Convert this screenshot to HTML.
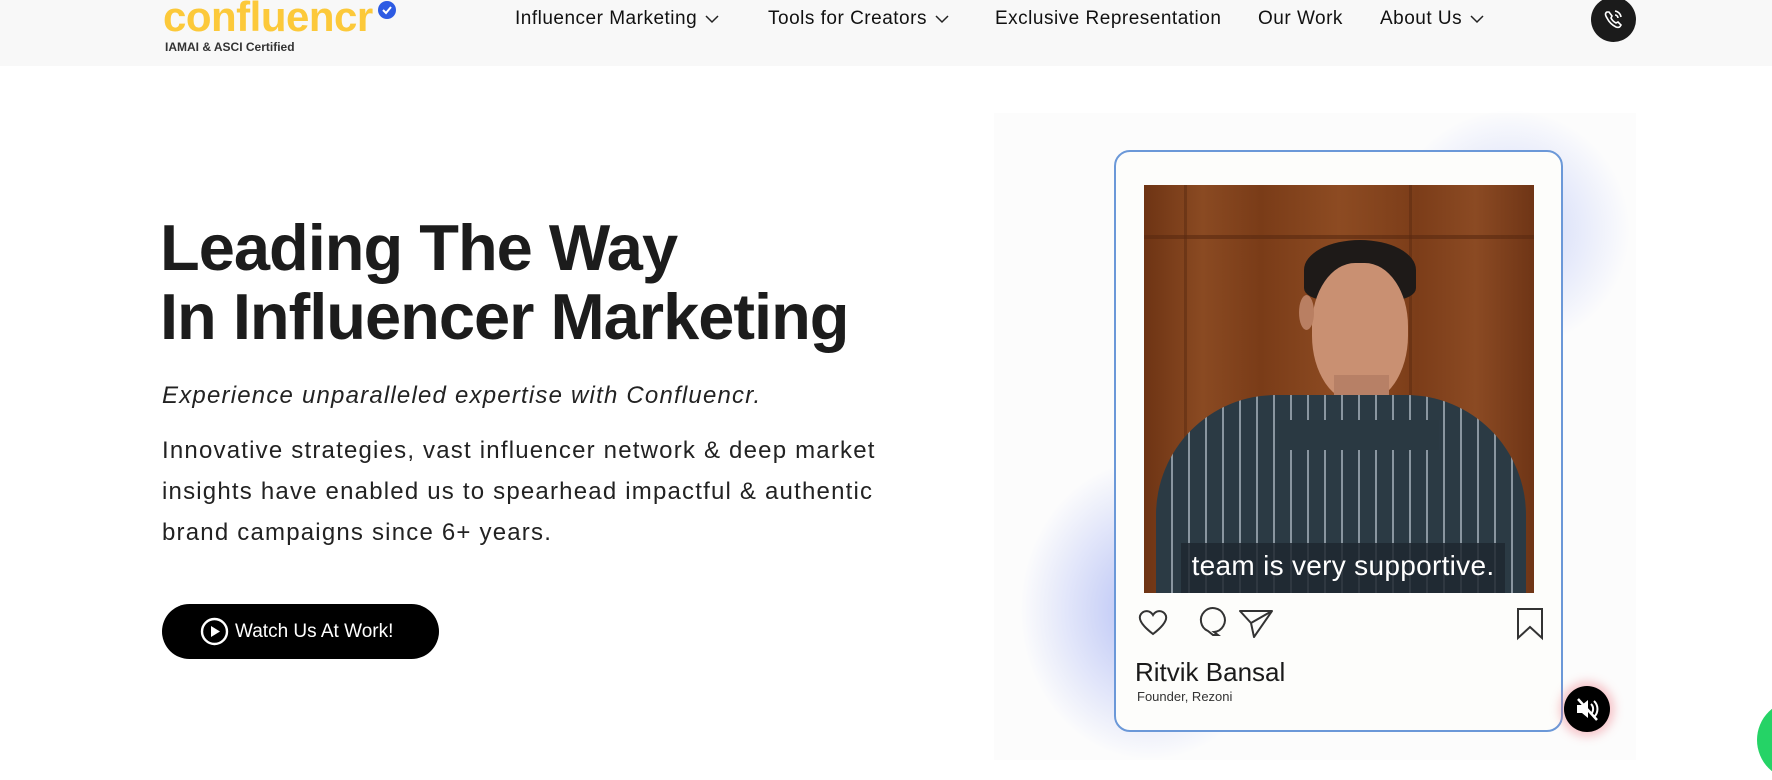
<!DOCTYPE html>
<html><head><meta charset="utf-8"><style>
*{margin:0;padding:0;box-sizing:border-box}
body{width:1772px;height:760px;overflow:hidden;background:#fff;font-family:"Liberation Sans",sans-serif;color:#1a1a1a;position:relative}
.abs{position:absolute}
header{position:absolute;left:0;top:0;width:1772px;height:66px;background:#f8f8f8}
.nav{position:absolute;top:8px;font-size:19px;color:#111;white-space:nowrap;letter-spacing:0.5px}
.nav svg{vertical-align:middle;margin-left:8px}
</style></head><body>
<header>
  <div class="abs" style="left:163px;top:-7px;font-size:42px;font-weight:bold;color:#fcc93a;letter-spacing:-0.5px">confluencr</div>
  <div class="abs" style="left:378px;top:1px;width:18px;height:18px;border-radius:50%;background:#2d5be3"><svg width="18" height="18" viewBox="0 0 18 18"><path d="M5 9l3 3 5-6" stroke="#fff" stroke-width="2" fill="none"/></svg></div>
  <div class="abs" style="left:165px;top:40px;font-size:12px;font-weight:bold;color:#333">IAMAI &amp; ASCI Certified</div>
  <div class="nav" style="left:515px">Influencer Marketing<svg width="14" height="10"><path d="M1 2l6 6 6-6" stroke="#222" stroke-width="1.5" fill="none"/></svg></div>
  <div class="nav" style="left:768px">Tools for Creators<svg width="14" height="10"><path d="M1 2l6 6 6-6" stroke="#222" stroke-width="1.5" fill="none"/></svg></div>
  <div class="nav" style="left:995px">Exclusive Representation</div>
  <div class="nav" style="left:1258px">Our Work</div>
  <div class="nav" style="left:1380px">About Us<svg width="14" height="10"><path d="M1 2l6 6 6-6" stroke="#222" stroke-width="1.5" fill="none"/></svg></div>
  <div class="abs" style="left:1591px;top:-3px;width:45px;height:45px;border-radius:50%;background:#1b1b1b">
    <svg width="45" height="45" viewBox="0 0 45 45"><path d="M16 15c-2 1-2 3 0 6 2 4 5 7 9 9 3 1 4 0 5-2l-3-3-2 1c-2-1-4-3-5-5l1-2-3-4z" stroke="#fff" stroke-width="1.6" fill="none"/><path d="M24 14a7 7 0 0 1 6 6M24 18a3 3 0 0 1 3 3" stroke="#fff" stroke-width="1.6" fill="none"/></svg>
  </div>
</header>

<div class="abs" style="left:160px;top:213px;font-size:65px;font-weight:bold;line-height:69px;letter-spacing:-1px;color:#1c1c1c">Leading The Way<br>In Influencer Marketing</div>
<div class="abs" style="left:162px;top:382px;font-size:24px;font-style:italic;color:#222;letter-spacing:1.2px">Experience unparalleled expertise with Confluencr.</div>
<div class="abs" style="left:162px;top:430px;font-size:24px;line-height:41px;color:#222;width:820px;letter-spacing:1.2px">Innovative strategies, vast influencer network &amp; deep market<br>insights have enabled us to spearhead impactful &amp; authentic<br>brand campaigns since 6+ years.</div>
<div class="abs" style="left:162px;top:604px;width:277px;height:55px;border-radius:28px;background:#000;color:#fff;font-size:19px;line-height:55px;padding-left:73px">Watch Us At Work!
  <svg class="abs" style="left:38px;top:13px" width="29" height="29" viewBox="0 0 29 29"><circle cx="14.5" cy="14.5" r="12.5" stroke="#fff" stroke-width="2.4" fill="none"/><path d="M11 9l9 5.5-9 5.5z" fill="#fff"/></svg>
</div>

<!-- right panel -->
<div class="abs" style="left:994px;top:113px;width:642px;height:647px;background:#fcfcfc"></div>
<div class="abs" style="left:1020px;top:460px;width:260px;height:300px;border-radius:50%;background:radial-gradient(closest-side,rgba(120,140,240,.55),rgba(120,140,240,0));"></div>
<div class="abs" style="left:1390px;top:110px;width:240px;height:240px;border-radius:50%;background:radial-gradient(closest-side,rgba(140,160,245,.45),rgba(140,160,245,0));"></div>

<div class="abs" style="left:1114px;top:150px;width:449px;height:582px;border:2px solid #6b98d8;border-radius:16px;background:#fdfdfb;overflow:hidden">
  <div class="abs" style="left:28px;top:33px;width:390px;height:408px;overflow:hidden;background:linear-gradient(90deg,#6e3414 0%,#8a4a22 15%,#7a3c18 30%,#8d4b22 50%,#7c3d19 70%,#8b4a23 85%,#6f3516 100%)">
    <div class="abs" style="left:0;top:50px;width:390px;height:4px;background:#5a2a10;opacity:.6"></div>
    <div class="abs" style="left:40px;top:0;width:3px;height:408px;background:#5a2a10;opacity:.5"></div>
    <div class="abs" style="left:265px;top:0;width:3px;height:408px;background:#5a2a10;opacity:.5"></div>
    <div class="abs" style="left:160px;top:55px;width:112px;height:60px;border-radius:50% 50% 20% 20%;background:#1e1a18"></div>
    <div class="abs" style="left:168px;top:78px;width:96px;height:140px;border-radius:45% 45% 48% 48%;background:#c99072"></div>
    <div class="abs" style="left:155px;top:110px;width:15px;height:35px;border-radius:50%;background:#b97f62"></div>
    <div class="abs" style="left:190px;top:190px;width:55px;height:60px;background:#b78066"></div>
    <div class="abs" style="left:12px;top:210px;width:370px;height:260px;border-radius:120px 120px 0 0;background:repeating-linear-gradient(90deg,#2b3a44 0 15px,#8a96a0 15px 17px);"></div>
    <div class="abs" style="left:135px;top:235px;width:160px;height:30px;background:#2a3942"></div>
    <div class="abs" style="left:37px;top:358px;width:324px;height:50px;background:rgba(30,40,48,.85)"></div>
    <div class="abs" style="left:37px;top:358px;width:324px;height:50px;color:#fff;font-size:28px;line-height:46px;text-align:center;letter-spacing:0.3px">team is very supportive.</div>
  </div>
  <svg class="abs" style="left:20px;top:452px" width="420" height="40" viewBox="0 0 420 40">
    <path d="M17 30C4 20 2 14 5 10c3-4 9-4 12 1 3-5 9-5 12-1 3 4 1 10-12 20z" stroke="#333" stroke-width="2" fill="none"/>
    <path d="M72 27a12 12 0 1 1 6 1l4 3-5 0z" stroke="#333" stroke-width="2" fill="none"/>
    <path d="M104 7h32l-18 26-3-14zM115 19l21-12" stroke="#333" stroke-width="2" fill="none" stroke-linejoin="round"/>
    <path d="M382 5h24v29l-12-11-12 11z" stroke="#333" stroke-width="2" fill="none"/>
  </svg>
  <div class="abs" style="left:19px;top:505px;font-size:26px;color:#1a1a1a">Ritvik Bansal</div>
  <div class="abs" style="left:21px;top:537px;font-size:13px;color:#333">Founder, Rezoni</div>
</div>

<div class="abs" style="left:1564px;top:686px;width:46px;height:46px;border-radius:50%;background:#000;box-shadow:0 0 10px 4px rgba(240,120,130,.45)">
  <svg width="46" height="46" viewBox="0 0 46 46"><path d="M13 19h5l6-5v18l-6-5h-5z" fill="#fff"/><path d="M27 18a7 7 0 0 1 0 10M30 15a11 11 0 0 1 0 16" stroke="#fff" stroke-width="2" fill="none"/><path d="M14 13l19 21" stroke="#fff" stroke-width="2.5"/></svg>
</div>
<div class="abs" style="left:1757px;top:700px;width:80px;height:80px;border-radius:50%;background:#25d366"></div>
</body></html>
